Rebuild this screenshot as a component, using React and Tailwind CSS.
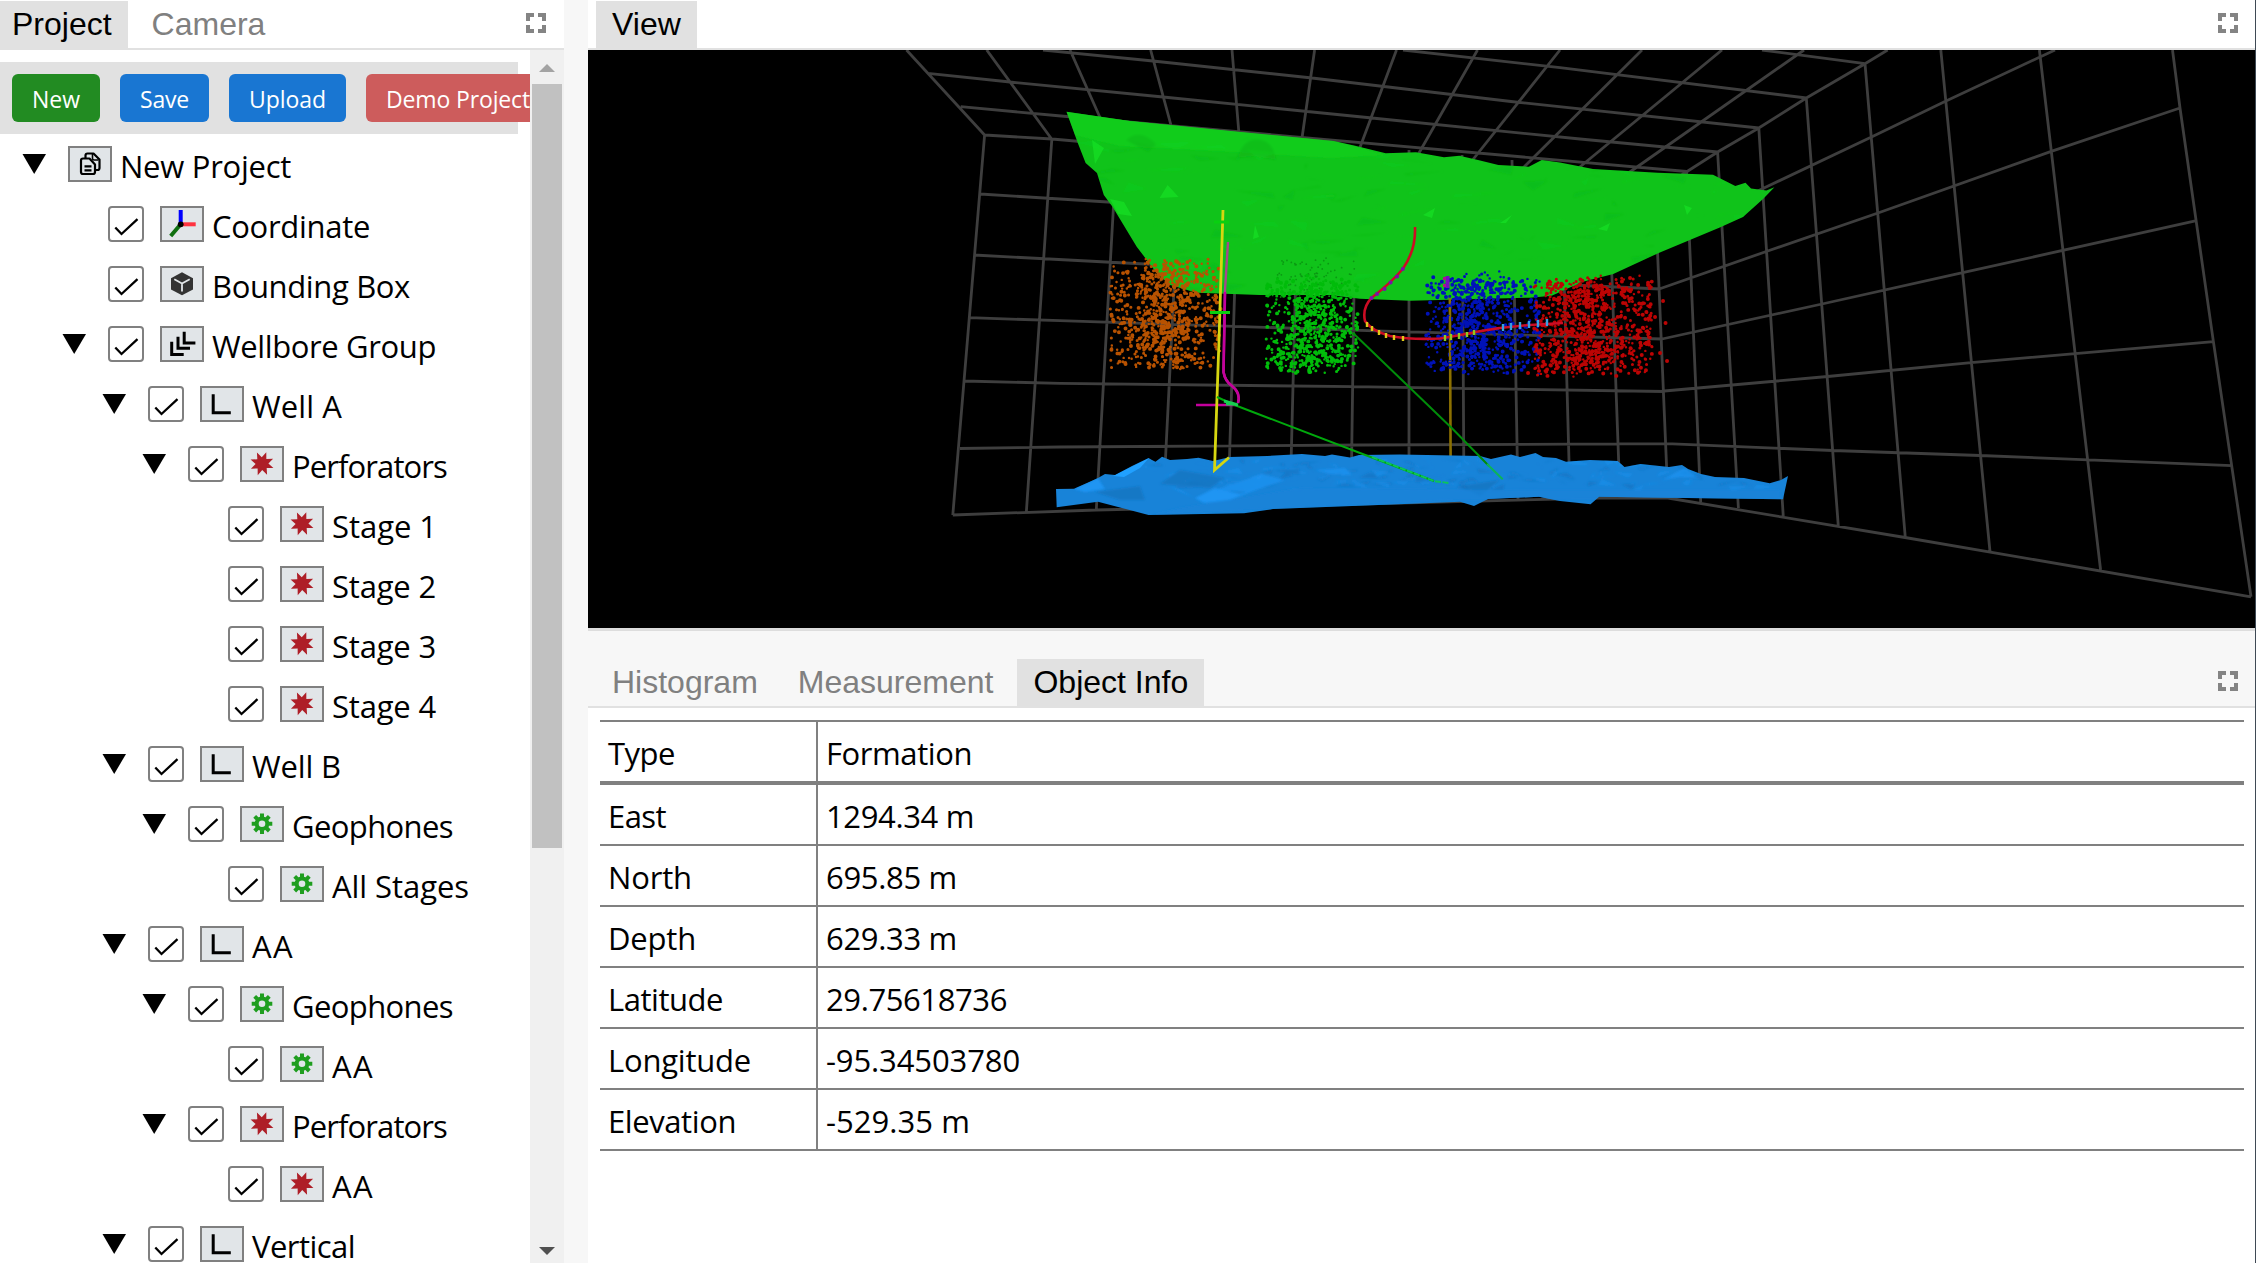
import { useLayoutEffect, useRef } from "react";

/* ---------- text ---------- */

// Text whose letter spacing is adjusted so that it takes `width` pixels.
function Fit({ width, className = "", children }) {
  const ref = useRef(null);
  useLayoutEffect(() => {
    const el = ref.current;
    el.style.letterSpacing = "0px";
    const natural = el.getBoundingClientRect().width;
    el.style.letterSpacing = (width - natural) / children.length + "px";
  }, [width, children]);
  return (
    <span ref={ref} className={"whitespace-pre " + className}>
      {children}
    </span>
  );
}

/* ---------- icons ---------- */

const starPoints = Array.from({ length: 16 }, (_, i) => {
  const r = i % 2 ? 6.4 : 12.2;
  const a = ((20.5 + i * 22.5) * Math.PI) / 180;
  return `${(22 + r * Math.sin(a)).toFixed(2)},${(17.7 - r * Math.cos(a)).toFixed(2)}`;
}).join(" ");

const icons = {
  project: (
    <g fill="none" stroke="#000" strokeWidth="2.2" strokeLinejoin="round">
      <path d="M17.5 12V9.5q0-2 2-2h6l6 6v8.500q0 2-2 2h-2" />
      <path d="M24.500 8v4.500q0 1.500 1.500 1.500h4.500" strokeWidth="1.600" />
      <path d="M13 14.500q0-2 2-2h6.500l5.500 6v7.500q0 2-2 2h-10q-2 0-2-2z" />
      <path d="M16.500 20.300h7M16.500 24.300h7" />
    </g>
  ),
  coordinate: (
    <g fill="none" strokeWidth="4">
      <path d="M20.700 18V4" stroke="#0000ff" />
      <path d="M21 18.300h14.700" stroke="#ff3340" />
      <path d="M20.700 18.300l-10 11.700" stroke="#107010" />
      <circle cx="20.700" cy="18.300" r="2.900" fill="#000" />
    </g>
  ),
  box: (
    <g>
      <path d="M22 6.300l11 6v11.200l-11 5.800l-11-5.800v-11.200z" fill="#333333" />
      <path d="M14.300 13.200l7.700 4.300l7.700-4.300M22 17.500v8" fill="none" stroke="#e1e5e8" strokeWidth="1.800" />
    </g>
  ),
  group: (
    <path
      d="M11.700 15.700v12.800h12M18 10.700v11.600h12M24.200 5.700v11.200h11.200"
      fill="none"
      stroke="#000"
      strokeWidth="3"
    />
  ),
  well: <path d="M13.200 8.300v18.500h17.600" fill="none" stroke="#000" strokeWidth="3" />,
  star: <polygon points={starPoints} fill="#ae1f28" />,
  gear: (
    <g stroke="#1f9e1f" fill="none">
      <circle cx="22" cy="17.700" r="5.300" strokeWidth="4" />
      <path
        strokeWidth="4"
        d="M22 7.400v5M22 23v5M11.700 17.700h5M27.300 17.700h5M14.700 10.400l3.500 3.500M25.800 21.500l3.500 3.500M29.300 10.400l-3.500 3.500M18.200 21.500l-3.500 3.500"
      />
    </g>
  ),
};

function IconBox({ name }) {
  return (
    <span className="mr-2 flex h-9 w-11 shrink-0 border-2 border-[#808080] bg-[#e1e5e8]">
      <svg className="h-8 w-10" viewBox="2 2 40 32">
        {icons[name]}
      </svg>
    </span>
  );
}

function Check() {
  return (
    <span className="mr-4 flex h-9 w-9 shrink-0 rounded-[4px] border-2 border-[#808080] bg-white">
      <svg className="h-8 w-8" viewBox="2 2 32 32">
        <path d="M7.300 21.500l6.200 6.500l16-14.800" fill="none" stroke="#000" strokeWidth="2.300" />
      </svg>
    </span>
  );
}

function Expand({ className }) {
  return (
    <svg className={"h-5 w-5 " + className} viewBox="0 0 20 20" fill="#848484">
      <path d="M0 0h8v4h-4v4h-4zM12 0h8v8h-4v-4h-4zM0 12h4v4h4v4h-8zM16 12h4v8h-8v-4h4z" />
    </svg>
  );
}

/* ---------- project tree ---------- */

const indents = ["pl-[22px]", "pl-[62px]", "pl-[102px]", "pl-[142px]", "pl-[182px]"];

const rows = [
  [0, true, false, "project", "New Project", 171],
  [1, false, true, "coordinate", "Coordinate", 158],
  [1, false, true, "box", "Bounding Box", 198],
  [1, true, true, "group", "Wellbore Group", 224],
  [2, true, true, "well", "Well A", 90],
  [3, true, true, "star", "Perforators", 155],
  [4, false, true, "star", "Stage 1", 105],
  [4, false, true, "star", "Stage 2", 104],
  [4, false, true, "star", "Stage 3", 104],
  [4, false, true, "star", "Stage 4", 104],
  [2, true, true, "well", "Well B", 89],
  [3, true, true, "gear", "Geophones", 161],
  [4, false, true, "gear", "All Stages", 137],
  [2, true, true, "well", "AA", 42],
  [3, true, true, "gear", "Geophones", 161],
  [4, false, true, "gear", "AA", 42],
  [3, true, true, "star", "Perforators", 155],
  [4, false, true, "star", "AA", 42],
  [2, true, true, "well", "Vertical", 103],
];

function TreeRow({ row: [level, open, check, icon, label, width] }) {
  return (
    <div className={"flex h-[60px] shrink-0 items-center " + indents[level]}>
      <span className="mr-[22px] w-6 shrink-0">
        {open && (
          <svg className="h-5 w-6" viewBox="0 0 24 20">
            <path d="M0.500 0h23.500L12.200 20z" />
          </svg>
        )}
      </span>
      {check && <Check />}
      <IconBox name={icon} />
      <Fit width={width} className="pt-1 text-[31px]">
        {label}
      </Fit>
    </div>
  );
}

const buttons = [
  ["New", 48, "bg-[#228b22]"],
  ["Save", 49, "bg-[#1976d2]"],
  ["Upload", 77, "bg-[#1976d2]"],
  ["Demo Project", 144, "bg-[#cd5c5c]"],
];

function Tab({ active, children }) {
  return (
    <div
      className={
        "flex h-[47px] items-center px-4 pb-0.5 font-['Liberation_Sans',sans-serif] text-[32px] " +
        (active ? "bg-[#e1e1e1] text-black" : "text-[#808080]")
      }
    >
      {children}
    </div>
  );
}

function ProjectPanel() {
  return (
    <section className="flex w-[564px] shrink-0 flex-col bg-white">
      <header className="flex h-[50px] shrink-0 items-center border-b-2 border-[#e1e1e1] pt-px">
        <div className="-ml-1 flex gap-2">
          <Tab active>Project</Tab>
          <Tab>Camera</Tab>
        </div>
        <Expand className="mr-[18px] mb-1 ml-auto" />
      </header>
      <div className="flex min-h-0 flex-1">
        <div className="flex w-[530px] flex-col overflow-hidden">
          <div className="mt-3 flex h-[72px] w-[518px] shrink-0 items-center gap-5 bg-[#e1e1e1] pl-3">
            {buttons.map(([label, width, color]) => (
              <button
                key={label}
                className={"flex h-12 shrink-0 items-center rounded-md px-5 pt-[3px] text-[23px] text-white " + color}
              >
                <Fit width={width}>{label}</Fit>
              </button>
            ))}
          </div>
          {rows.map((row, i) => (
            <TreeRow key={i} row={row} />
          ))}
        </div>
        <div className="flex w-[34px] flex-col items-center bg-[#f0f0f0] pt-3.5 pb-2">
          <svg className="h-2 w-4 shrink-0" viewBox="0 0 16 8">
            <path d="M8 0l8 8H0z" fill="#a3a3a3" />
          </svg>
          <div className="mt-3 h-[764px] w-[30px] bg-[#c1c1c1]" />
          <svg className="mt-auto h-2 w-4 shrink-0" viewBox="0 0 16 8">
            <path d="M0 0h16L8 8z" fill="#505050" />
          </svg>
        </div>
      </div>
    </section>
  );
}

/* ---------- 3D view ---------- */

function random(seed) {
  let s = seed;
  return () => {
    s = (s + 0x6d2b79f5) | 0;
    let t = Math.imul(s ^ (s >>> 15), 1 | s);
    t = (t + Math.imul(t ^ (t >>> 7), 61 | t)) ^ t;
    return ((t ^ (t >>> 14)) >>> 0) / 4294967296;
  };
}

const grid = [
  // back wall, verticals
  "984.600 135L952.800 515", "1051.800 139.300L1026.300 512.700", "1117 144L1096.300 510", "1181 150L1163 508",
  "1239 150L1228 506", "1299 150L1290 504", "1356 150L1351 502", "1409 150V500", "1462 155L1464 500",
  "1512 160L1518 499", "1561 165L1570 498", "1608 170L1620 498", "1655 192L1667.900 498",
  // back wall, horizontals
  "984.600 135L1052 139L1655 192", "980 194L1108 202L1657 240", "973.700 255L1125 263L1573 285L1660 289",
  "969.400 317.700L1060 320.700L1400 331.700L1662 339", "964 381L1060 383.300L1353 386.700L1664 391.500",
  "960 448.500L1060 447L1360 445L1666.500 443.700", "952.800 515L1096 510L1400 503L1599 498L1668 498",
  // ceiling, across
  "960.700 106.700L1061 116L1686.500 171.500", "928 73.300L1010 82L1163 97L1372 118L1580 139L1717.600 152",
  "1043 50L1153 61L1312 78L1511 101.500L1758.800 128", "1403 50L1560 67.600L1806.300 98", "1762 50L1865 63.700",
  // ceiling, receding
  "906.500 50L984.600 135", "986.700 50L1051.800 139.300", "1070 50L1110 140", "1150.600 50L1175 140",
  "1232 50L1239.500 140", "1314.600 50L1301 145", "1396.500 50L1359 150", "1477.500 50L1415 160",
  "1560 50L1471 162", "1642 50L1520 171", "1722 50L1575 171", "1804 50L1627 174", "1887.600 50L1865 63.700L1806.300 98L1758.800 128L1717.600 152L1655 192",
  // right wall, verticals
  "1686.500 171.500L1700.700 502", "1717.600 152L1738.400 508", "1758.800 128L1783.300 516.800", "1806.300 98L1838.300 526",
  "1865 63.700L1905.300 537.500", "1940.800 50L1990 551.700", "2039.400 50L2100.600 570", "2172.500 50L2180 108L2213.400 341.600L2251 596.800",
  // right wall, horizontals
  "2055 50L1946 101L1872 136.800L1765 187.500L1657 240", "2180 108L2050.500 151.700L1878 213L1767.700 251L1659.900 288.700",
  "2196.500 220.600L1962.700 272.700L1822 304L1662 339", "2213.400 341.600L1971 362.700L1827.700 376.500L1664.300 391",
  "2231.600 465.600L1980 455.500L1833 450.500L1666.500 443.700", "2251 596.800L1905 537.500L1667.900 498",
].map((d) => "M" + d).join("");

const greenSurface =
  "1066.500,111.700 1129.800,121 1238,131.700 1333.600,141 1355,145.700 1385.700,153.300 1416,152.300 1444,157.300 1459.400,155.700 1478,160 1498.400,165 1528.800,166.700 1541.800,160 1560,162.500 1593,169 1657.600,172.800 1713,174.700 1735.300,186 1745.500,182.700 1751,188.500 1766.400,190.400 1774.400,187.300 1763.300,198.800 1743,217 1719.800,227.500 1659.900,252.400 1613.300,274 1582,282 1551.700,295.700 1530,297.700 1410,300.700 1360,298.700 1330,295 1260,295 1196.700,292.700 1170,285 1156.700,273 1136.700,246.700 1112.500,206.700 1103.800,195 1097,173 1085.600,163 1077.800,143";

const blueSurface =
  "1056,489 1074,488.700 1087,483 1098,478 1105,474 1115,475 1132,466 1148.600,458 1152,460 1155.500,461.700 1162,456.700 1170,460 1187,459 1198.500,457.700 1213,461 1230,457 1267.400,456 1302,454 1325,456 1332,454.500 1341,456 1350,457.500 1359,455 1400,454.500 1480,456 1491,459 1511,454.500 1520,457 1535.500,453 1543,457 1556,458 1566,461.700 1590,460 1617.600,461 1624.500,467 1640.500,464 1669,467 1682,465 1688,469 1701,474 1715,477 1744,478 1769.700,483.300 1781,480 1788,476 1783,499.300 1669,497.700 1599,496.700 1590.600,504.300 1560,501 1539,496.700 1488,499 1474,506 1460,501.700 1405,504 1273,509 1244,513.300 1148.600,515 1098,501.700 1056.700,507.300";

function facets(seed, count, box, size, flat) {
  const r = random(seed);
  const out = ["", ""];
  for (let i = 0; i < count; i++) {
    const x = box[0] + r() * (box[2] - box[0]);
    const y = box[1] + r() * (box[3] - box[1]);
    const pt = () => `${(x + (r() - 0.5) * size * 2.4).toFixed(1)} ${(y + (r() - 0.5) * size * flat).toFixed(1)}`;
    out[i % 2] += `M${pt()}L${pt()}L${pt()}z`;
  }
  return out;
}

const greenFacets = facets(5, 170, [1080, 135, 1740, 295], 20, 0.6);
const blueFacets = facets(9, 190, [1150, 460, 1770, 488], 11, 0.7);

// Cloud of events: dense towards the middle, thinning out at the edges.
function cloud(seed, count, [x0, y0, x1, y1], center) {
  const r = random(seed);
  const out = ["", "", ""];
  for (let i = 0; i < count; i++) {
    let u = r();
    let v = 0.52 + (r() - 0.5) * (0.8 + 0.2 * r());
    if (r() < 0.35) u = center + (r() + r() - 1) * 0.34;
    if (r() < 0.08) v = r();
    out[i % 3] += `M${(x0 + u * (x1 - x0)).toFixed(1)} ${(y0 + v * (y1 - y0)).toFixed(1)}h.1`;
  }
  return out;
}

const clouds = [
  { color: "#b85200", paths: cloud(1, 820, [1110, 257, 1221, 369], 0.5) },
  { color: "#00bc0a", paths: cloud(2, 700, [1266, 274, 1358, 372], 0.5) },
  { color: "#0012b8", paths: cloud(3, 780, [1426, 270, 1540, 373], 0.42) },
  { color: "#bc0404", paths: cloud(4, 900, [1534, 275, 1652, 376], 0.45) },
];
const greenHaze = cloud(12, 90, [1270, 258, 1356, 300], 0.5).join("");
const redStrays = "M1663 301h.1M1665.500 323h.1M1655 317h.1M1660 353h.1M1667 361h.1M1648 285h.1M1630 278h.1M1537 306h.1M1528 373h.1";

function Scene() {
  return (
    <svg className="block h-[578px] w-[1667px] bg-black" viewBox="588 50 1667 578" fill="none">
      <defs>
        <clipPath id="green-clip">
          <polygon points={greenSurface} />
        </clipPath>
        <clipPath id="blue-clip">
          <polygon points={blueSurface} />
        </clipPath>
        <filter id="shade">
          <feGaussianBlur stdDeviation="1" />
        </filter>
      </defs>

      <path d={grid} stroke="#3e3e3e" strokeWidth="2.800" />

      <polygon points={greenSurface} fill="#10c31a" />
      <g clipPath="url(#green-clip)">
        <g filter="url(#shade)">
          <path d="M1066 111L1238 131L1334 141L1386 155L1330 158L1200 150L1120 146L1075 135z" fill="#12d01d" opacity=".7" />
          <path d="M1237 158q8-22 24-18q12 2 15 20l-20-4z" fill="#0eb216" opacity=".5" />
          <path d="M1126 140q14-12 30 4l-8 8z" fill="#0eb216" opacity=".4" />
          <path d={greenFacets[0]} fill="#0eb217" opacity=".3" />
          <path d={greenFacets[1]} fill="#14d820" opacity=".24" />
        </g>
        <path
          d="M1167.600 185l-8 13l19-1zM1092 140l12 8l-9 16zM1110 199l14 3l8 14l-14-2zM1255 225l4 12l-6 2zM1423 215l12-7l-3 10zM1684 205l8 3l-5 7zM1598 229l12-6l-3 8zM1500 223l12-8l-6 8z"
          fill="#18e626"
          opacity=".6"
        />
      </g>

      <path d="M1449.900 298L1450.600 458" stroke="#8c7000" strokeWidth="2.600" />

      <polygon points={blueSurface} fill="#1883d8" />
      <g clipPath="url(#blue-clip)">
        <g filter="url(#shade)">
          <path d={blueFacets[0]} fill="#1672be" opacity=".6" />
          <path d={blueFacets[1]} fill="#1b93f2" opacity=".5" />
          <path d="M1074 489L1098 478L1105 489L1085 492zM1168 486L1180 490L1204 503L1230 500L1260 488L1240 494L1215 488L1195 498z" fill="#1e98fa" opacity=".8" />
          <path d="M1180 470L1225 478L1210 488L1160 484zM1095 492L1140 486L1145 500L1120 500zM1460 486L1500 480L1480 496z" fill="#156fb9" opacity=".6" />
          <path d="M1215 490L1262 474L1285 480L1250 492zM1315 470L1345 468L1352 475L1330 474zM1662 480L1684 468L1698 478L1680 477z" fill="#1c94f4" opacity=".7" />
          <path d="M1150 515L1270 509L1460 500L1780 499L1780 490L1540 490L1300 488L1180 508z" fill="#1883d8" opacity=".75" />
        </g>
        <path d="M1113 476L1149 458L1140 468L1124 477z" fill="#20a0ff" />
      </g>

      <path d={greenHaze} stroke="#0a9812" strokeWidth="1.700" strokeLinecap="round" />
      {clouds.map(({ color, paths }) => (
        <g key={color} stroke={color} strokeLinecap="round">
          <path d={paths[0]} strokeWidth="2.400" />
          <path d={paths[1]} strokeWidth="3" />
          <path d={paths[2]} strokeWidth="3.900" />
        </g>
      ))}
      <path d={redStrays} stroke="#bc0404" strokeWidth="3.900" strokeLinecap="round" />
      <path d="M1449.900 298V362" stroke="#8c7000" strokeWidth="2" strokeDasharray="5 4" />

      <path d="M1228 242L1225 290L1223.500 372Q1225 381 1232 386Q1241 393 1238 403" stroke="#a8478c" strokeWidth="2.400" />
      <path d="M1225 292L1223.500 372Q1225 381 1232 386Q1241 393 1238 403M1196 405H1236" stroke="#c4009c" strokeWidth="2.600" />
      <path d="M1223 210L1219 340L1214.500 470L1229 457.500" stroke="#d6d610" strokeWidth="2.800" />
      <path d="M1214 222h15M1210 312.500h20" stroke="#08d010" strokeWidth="3.200" />
      <path d="M1217 397L1232 404L1360 453L1434 481" stroke="#00a80c" strokeWidth="2" />
      <path d="M1224 401l14 4M1226 404h8" stroke="#18cc50" strokeWidth="3" />
      <path d="M1372 457L1434 481L1449 483" stroke="#0cc45a" strokeWidth="2" strokeDasharray="6 1.500" />
      <path d="M1353 333L1451.700 428L1489 466" stroke="#008c0a" strokeWidth="2" />
      <path d="M1487 464L1502.700 479.300" stroke="#0cb458" strokeWidth="2" />

      <path
        d="M1415 227Q1416 250 1402.700 269Q1392 282 1371.700 297.700Q1362 308 1365 321Q1372 331 1390 336Q1412 340 1440 338.500Q1462 335 1476.700 331.700Q1503 327 1530 325L1563 323"
        stroke="#cc0c24"
        strokeWidth="2.600"
      />
      <path d="M1402.700 269h.1M1397 276.500h.1M1390.500 282.500h.1M1384.500 289h.1M1377 294h.1M1371.500 298h.1" stroke="#7c10a8" strokeWidth="4" strokeLinecap="round" />
      <path d="M1367 322v5M1372 326v5M1379 330v5M1386 333v5M1394 335v5M1403 336v5" stroke="#e0c818" strokeWidth="2.400" />
      <path d="M1445 335v6M1451 334v6M1459 333v6M1467 332v5M1474 330v5" stroke="#8ccc20" strokeWidth="2.400" />
      <path d="M1503 324v7M1511 323v7M1520 322v7M1529 321v7M1538 320v7M1547 319v7" stroke="#38a0e0" strokeWidth="2.400" />
      <path d="M1447.500 276v12" stroke="#7410c0" strokeWidth="4" />
      <path d="M1444.500 277v3M1444.500 284v3" stroke="#b01090" strokeWidth="3" />
    </svg>
  );
}

/* ---------- object info ---------- */

const info = [
  ["Type", 67, "Formation", 146],
  ["East", 58, "1294.34 m", 148],
  ["North", 84, "695.85 m", 131],
  ["Depth", 88, "629.33 m", 131],
  ["Latitude", 115, "29.75618736", 181],
  ["Longitude", 143, "-95.34503780", 194],
  ["Elevation", 128, "-529.35 m", 144],
];

function RightColumn() {
  return (
    <div className="flex w-[1667px] shrink-0 flex-col">
      <section className="shrink-0 bg-white">
        <header className="flex h-[50px] items-center border-b-2 border-[#e1e1e1] pt-px pl-2">
          <Tab active>View</Tab>
          <Expand className="mr-[17px] mb-1 ml-auto" />
        </header>
        <Scene />
      </section>
      <section className="flex min-h-0 flex-1 flex-col border-t-3 border-[#dddddd] bg-white">
        <header className="flex h-[77px] shrink-0 items-end border-b-2 border-[#e1e1e1] bg-[#f7f7f7] pl-2">
          <div className="flex gap-2">
            <Tab>Histogram</Tab>
            <Tab>Measurement</Tab>
            <Tab active>Object Info</Tab>
          </div>
          <Expand className="mr-[17px] mb-[15px] ml-auto" />
        </header>
        <div className="mt-3 ml-3 w-[1644px] border-t-2 border-[#808080]">
          {info.map(([name, nameWidth, value, valueWidth], i) => (
            <div
              key={name}
              className={"flex border-[#808080] text-[31px] " + (i === 0 ? "h-[63px] border-b-4" : "h-[61px] border-b-2")}
            >
              <div className="flex w-[218px] items-center border-r-2 border-[#808080] pt-1 pl-2">
                <Fit width={nameWidth}>{name}</Fit>
              </div>
              <div className="flex items-center pt-1 pl-2">
                <Fit width={valueWidth}>{value}</Fit>
              </div>
            </div>
          ))}
        </div>
      </section>
    </div>
  );
}

export default function App() {
  return (
    <div className="flex h-[1263px] w-[2256px] overflow-hidden bg-[#f7f7f7] font-['Open_Sans',sans-serif] leading-none text-black">
      <ProjectPanel />
      <div className="w-6 shrink-0" />
      <RightColumn />
      <div className="w-px shrink-0 bg-[#3f4a55]" />
    </div>
  );
}
